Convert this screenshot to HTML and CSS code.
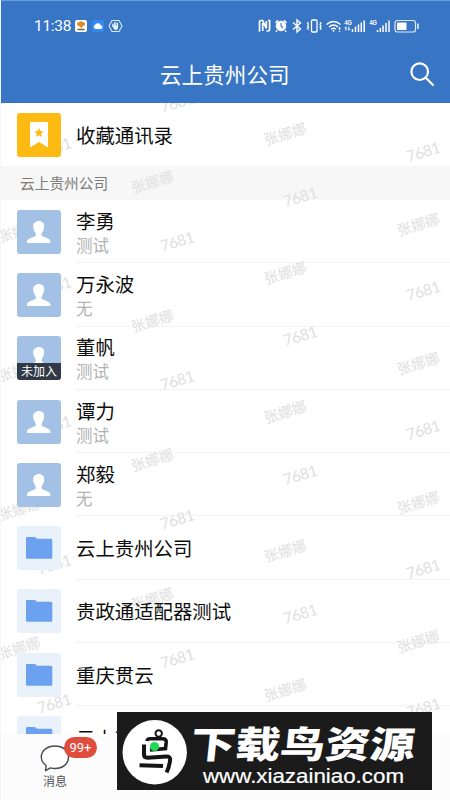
FILE: index.html
```html
<!DOCTYPE html>
<html lang="zh-CN">
<head>
<meta charset="utf-8">
<title>云上贵州公司</title>
<link rel="stylesheet" href="styles.css">
</head>
<body>
<svg class="defs" width="0" height="0">
  <defs>
    <symbol id="person" viewBox="0 0 44 44"><path fill="#fff" d="M22 11c3.300 0 5.300 2.300 5.200 5.500-.1 2.700-.9 4.600-2.300 6.400-.8 1.400-.4 3 1 3.700 3.500 1.500 6.900 2.200 7.500 4.700V33H10v-1.700c.6-2.500 4-3.200 7.500-4.700 1.400-.7 1.800-2.300 1-3.700-1.400-1.800-2.200-3.700-2.300-6.400C16 13.300 18.700 11 22 11z"/></symbol>
    <symbol id="folder" viewBox="0 0 44 44"><path fill="#6ba1ef" d="M10 11h8l2 1.800H34q1.300 0 1.300 1.300V31.500q0 1.300-1.300 1.300H10.300Q9 32.800 9 31.500V12Q9 11 10 11z"/></symbol>
  </defs>
</svg>
<div class="phone">
  <header class="header">
    <div class="status">
      <span class="time">11:38</span>
      <svg class="apps" width="50" height="16" viewBox="0 0 50 16">
        <rect x="1" y="2" width="12" height="12" rx="2" fill="#fff"/>
        <path d="M3 6q0-2 2-2 2-1.500 4 0 2 0 2 2 0 2-2 2L7.500 10 5 8Q3 8 3 6z" fill="#dc8a26"/><path d="M3.500 11.500h7" stroke="#765b3c" stroke-width="1.500"/>
        <rect x="18" y="2" width="12" height="12" rx="2" fill="#2f8bf2"/>
        <path d="M21.500 11a2.300 2.300 0 0 1 0-4.400 3 3 0 0 1 5.300.6 2 2 0 0 1 .4 3.800z" fill="#fff"/>
        <path d="M38 2.500h7l3 5.500-3 5.500h-7L35 8z" fill="none" stroke="#d9ecff" stroke-width="1.100"/>
        <path d="M38.800 8.300v-2M40.300 8V4.800M41.900 8V4.400M43.500 8V5.200" stroke="#e9f5ff" stroke-width="1.100" stroke-linecap="round"/><path d="M38.300 7.500h5.800v1.800q0 2.600-2.600 2.600-1.600 0-3.200-4.400z" fill="#e9f5ff"/>
      </svg>
      <svg class="signals" width="164" height="18" viewBox="0 0 164 18" fill="none" stroke="#fff">
        <path d="M2.200 14H1.500V5Q1.500 3.500 3 3.500h1.700l3.600 8V4M4.700 14V6M8.500 14H10q1.600 0 1.600-1.500v-9H10" stroke-width="1.700"/>
        <circle cx="23" cy="9" r="4.800" fill="#fff"/><path d="M23 6v3l2 2" stroke="#3875c5" stroke-width="1.100"/><path d="M17.500 6l2.500-2.700M28.500 6L26 3.300M19 13.500l-1.200 1.300M27 13.500l1.200 1.300" stroke-width="1.500"/>
        <path d="M35 5.500l7.500 6.500-3.500 3V3l3.500 3-7.500 6.500" stroke-width="1.400"/>
        <rect x="53.500" y="3" width="5.500" height="12" rx="1" stroke-width="1.300"/><path d="M50.500 5l-1 1.300 1 1.300-1 1.300 1 1.300-1 1.300 1 1.200M62 5l1 1.300-1 1.300 1 1.300-1 1.300 1 1.300-1 1.200" stroke-width="1.200"/>
        <path d="M68.500 7.500q7-6.200 14 0M71 10q4.500-4 9 0M73.200 12.300q2.300-2 4.600 0" stroke-width="1.400"/><path d="M75.500 13v1.800M81.500 10v3M81.500 13.900v1.200" stroke-width="1.400"/>
        <text x="86.500" y="7.800" class="net" textLength="7.500" lengthAdjust="spacingAndGlyphs">4G</text><text x="111.500" y="7.800" class="net" textLength="7.500" lengthAdjust="spacingAndGlyphs">4G</text>
        <path d="M88 9.500v4M90.800 9.500v4M86.800 11h1.400M90.700 12.500h1.500" stroke-width="1"/>
        <path d="M94.500 15v-3M97.500 15V9.500M100.500 15V7.500M103.300 15V5.500M106.200 15V3.500M119.500 15v-2M122.300 15v-4M125 15V8.500M128 15V6M131 15V3.500" stroke-width="1.500"/>
        <rect x="137" y="3.500" width="20.500" height="11.500" rx="2.500" stroke="#dce9fb" stroke-width="1.200"/><rect x="139" y="5.500" width="9.500" height="7.500" rx=".7" fill="#fff" stroke="none"/><path d="M160 6.500v5.500" stroke-width="1.400"/>
      </svg>
    </div>
    <div class="titlebar">
      <h1>云上贵州公司</h1>
      <svg class="search" width="26" height="26" viewBox="0 0 26 26" fill="none" stroke="#fff" stroke-width="2.200"><circle cx="10.700" cy="10.700" r="8.300"/><path d="M16.500 16.500L24 24" stroke-linecap="round"/></svg>
    </div>
  </header>

  <main class="list">
    <div class="row favorite">
      <div class="avatar gold"><svg viewBox="0 0 44 44"><path d="M14 9h16q1 0 1 1v24.500l-9-5.500-9 5.500V10q0-1 1-1z" fill="#fff"/><path d="M22 15l1.400 3 3.200.4-2.400 2.200.6 3.300-2.800-1.600-2.800 1.600.6-3.300-2.400-2.200 3.200-.4z" fill="#fdba13"/></svg></div>
      <div class="body"><span class="name">收藏通讯录</span></div>
    </div>
    <div class="section">云上贵州公司</div>
    <div class="row"><div class="avatar"><svg><use href="#person"/></svg></div><div class="body"><span class="name">李勇</span><span class="sub">测试</span></div></div>
    <div class="row"><div class="avatar"><svg><use href="#person"/></svg></div><div class="body"><span class="name">万永波</span><span class="sub">无</span></div></div>
    <div class="row"><div class="avatar"><svg><use href="#person"/></svg><span class="tag">未加入</span></div><div class="body"><span class="name">董帆</span><span class="sub">测试</span></div></div>
    <div class="row"><div class="avatar"><svg><use href="#person"/></svg></div><div class="body"><span class="name">谭力</span><span class="sub">测试</span></div></div>
    <div class="row"><div class="avatar"><svg><use href="#person"/></svg></div><div class="body"><span class="name">郑毅</span><span class="sub">无</span></div></div>
    <div class="row"><div class="avatar pale"><svg><use href="#folder"/></svg></div><div class="body"><span class="name">云上贵州公司</span></div></div>
    <div class="row"><div class="avatar pale"><svg><use href="#folder"/></svg></div><div class="body"><span class="name">贵政通适配器测试</span></div></div>
    <div class="row"><div class="avatar pale"><svg><use href="#folder"/></svg></div><div class="body"><span class="name">重庆贯云</span></div></div>
    <div class="row"><div class="avatar pale"><svg><use href="#folder"/></svg></div><div class="body"><span class="name">云上艾</span></div></div>
    <svg class="watermark" width="450" height="631" viewBox="0 103 450 631" aria-hidden="true">
      <defs>
        <g id="marks">
          <text transform="translate(152 181) rotate(-17)">张娜娜</text>
          <text transform="translate(285 133) rotate(-17)">张娜娜</text>
          <text transform="translate(418 223.500) rotate(-17)">张娜娜</text>
          <text transform="translate(19 230) rotate(-17)">张娜娜</text>
          <text class="num" transform="translate(177 241) rotate(-17)">7681</text>
          <text class="num" transform="translate(300 196.500) rotate(-17)">7681</text>
          <text class="num" transform="translate(423 151.500) rotate(-17)">7681</text>
          <text class="num" transform="translate(54 147) rotate(-17)">7681</text>
        </g>
      </defs>
      <use href="#marks" y="-139"/><use href="#marks"/><use href="#marks" y="139"/><use href="#marks" y="278"/><use href="#marks" y="417"/><use href="#marks" y="556"/>
    </svg>
  </main>

  <footer class="tabs">
    <div class="tab">
      <svg width="30" height="28" viewBox="0 0 30 28"><path d="M6.200 21.500C3 19.300 1.300 16.700 1.300 13.200 1.300 6.500 7.300 2 15 2s13.500 4.500 13.500 11.200S22.700 24.500 15 24.500q-2.300 0-4.500-.6l-5 2.800z" fill="#fff" stroke="#454950" stroke-width="1.400" stroke-linejoin="round"/></svg>
      <span>消息</span>
      <b class="badge">99+</b>
    </div>
  </footer>

  <div class="banner">
    <svg width="315" height="78" viewBox="117 712 315 78">
      <circle cx="154.700" cy="752.300" r="32.200" fill="#fff"/>
      <g fill="none" stroke="#151515" stroke-width="4">
        <circle cx="158.700" cy="733.500" r="3.200" stroke-width="2"/>
        <path d="M147 741q.3-2.300 3-2.300h12.500q4 0 3.700 3.500l-.7 6.300-15.500 1.500" stroke-width="3.600"/>
        <path d="M144 744.500v10q0 3.200 3.500 3.200l19-1.200q4-.1 3.600 3.500-.7 6.500-3.500 12.500"/>
        <path d="M139.500 765.200l23.500.8"/>
      </g>
      <circle cx="154.500" cy="746.500" r="4.600" fill="#23d957"/>
      <text class="brand" transform="translate(189.500 757.500) skewX(-6)" textLength="224" lengthAdjust="spacingAndGlyphs">下载鸟资源</text>
      <text class="url" x="203" y="782.500" textLength="201" lengthAdjust="spacingAndGlyphs">www.xiazainiao.com</text>
    </svg>
  </div>
</div>
</body>
</html>
```
FILE: styles.css
```css
* { box-sizing: border-box; }
body {
  margin: 0;
  font-family: "Noto Sans CJK SC", sans-serif;
  background: #fff;
}
.defs { position: absolute; }
.phone {
  position: relative;
  width: 450px;
  height: 800px;
  overflow: hidden;
  display: flex;
  flex-direction: column;
  border-left: 1px solid #f3f6fa;
}
.header {
  height: 103px;
  flex: none;
  background: #3875c5;
  border-top: 1px solid #669bdc;
  color: #fff;
}
.status {
  height: 48px;
  padding: 2px 28px 0 33px;
  display: flex;
  align-items: center;
}
.time {
  width: 40px;
  font: 15.500px/20px Roboto, sans-serif;
  letter-spacing: -.3px;
  white-space: nowrap;
}
.signals { margin-left: auto; }
.net {
  font: bold 7px "Liberation Sans", sans-serif;
  fill: #fff;
  stroke: none;
}
.titlebar {
  height: 54px;
  padding: 0 15px 4px 159px;
  display: flex;
  align-items: center;
  justify-content: space-between;
}
h1 {
  margin: 0;
  font-size: 21.600px;
  line-height: 30px;
  font-weight: 400;
}
.list {
  position: relative;
  height: 631px;
  flex: none;
  overflow: hidden;
}
.row {
  height: 63.300px;
  padding-left: 16px;
  display: flex;
  align-items: center;
}
.favorite { height: 63px; }
.avatar {
  position: relative;
  z-index: 2;
  width: 44px;
  height: 44px;
  flex: none;
  margin-right: 15px;
  border-radius: 3px;
  overflow: hidden;
  background: #a3c0e5;
}
.avatar svg {
  display: block;
  width: 44px;
  height: 44px;
}
.gold { background: #fdba13; }
.pale { background: #e9f2fb; }
.tag {
  position: absolute;
  left: 0;
  bottom: 0;
  width: 44px;
  height: 17px;
  background: #303945;
  color: #fff;
  font-size: 12px;
  line-height: 16px;
  text-align: center;
}
.body {
  flex: 1;
  height: 100%;
  display: flex;
  flex-direction: column;
  justify-content: center;
  border-bottom: 1px solid #f3f3f3;
}
.favorite .body { border: 0; }
.name {
  position: relative;
  z-index: 2;
  font-size: 19.400px;
  line-height: 27px;
  color: #0c0c0c;
}
.sub {
  font-size: 16.500px;
  line-height: 22px;
  color: #b2b2b2;
}
.section {
  height: 34px;
  padding-left: 19px;
  background: #f7f7f7;
  color: #7c7c7c;
  font-size: 14.700px;
  line-height: 34px;
}
.watermark {
  position: absolute;
  left: -1px;
  top: 0;
  z-index: 1;
  fill: #e0e0e0;
  font-size: 14.500px;
  text-anchor: middle;
  dominant-baseline: central;
}
.num {
  font-family: Lato, sans-serif;
  font-size: 15.500px;
  letter-spacing: -.3px;
}
.tabs {
  flex: 1;
  padding-left: 24px;
  background: #fcfcfc;
}
.tab {
  position: relative;
  width: 60px;
  padding-top: 10px;
  display: flex;
  flex-direction: column;
  align-items: center;
  font-size: 12px;
  line-height: 18px;
  color: #4e5258;
}
.badge {
  position: absolute;
  left: 39px;
  top: 3px;
  width: 33px;
  height: 21px;
  border-radius: 11px;
  background: #df4d3d;
  color: #fff;
  font: 13px/21px Roboto, sans-serif;
  text-align: center;
}
.banner {
  position: absolute;
  left: 116px;
  top: 712px;
  z-index: 3;
  width: 315px;
  height: 78px;
  background: #1b1b1b;
}
.banner svg { display: block; }
.brand {
  font-size: 37px;
  font-weight: 900;
  fill: #fff;
}
.url {
  font: 20.500px "Liberation Sans", sans-serif;
  fill: #fff;
  stroke: #fff;
  stroke-width: .2;
}
```
